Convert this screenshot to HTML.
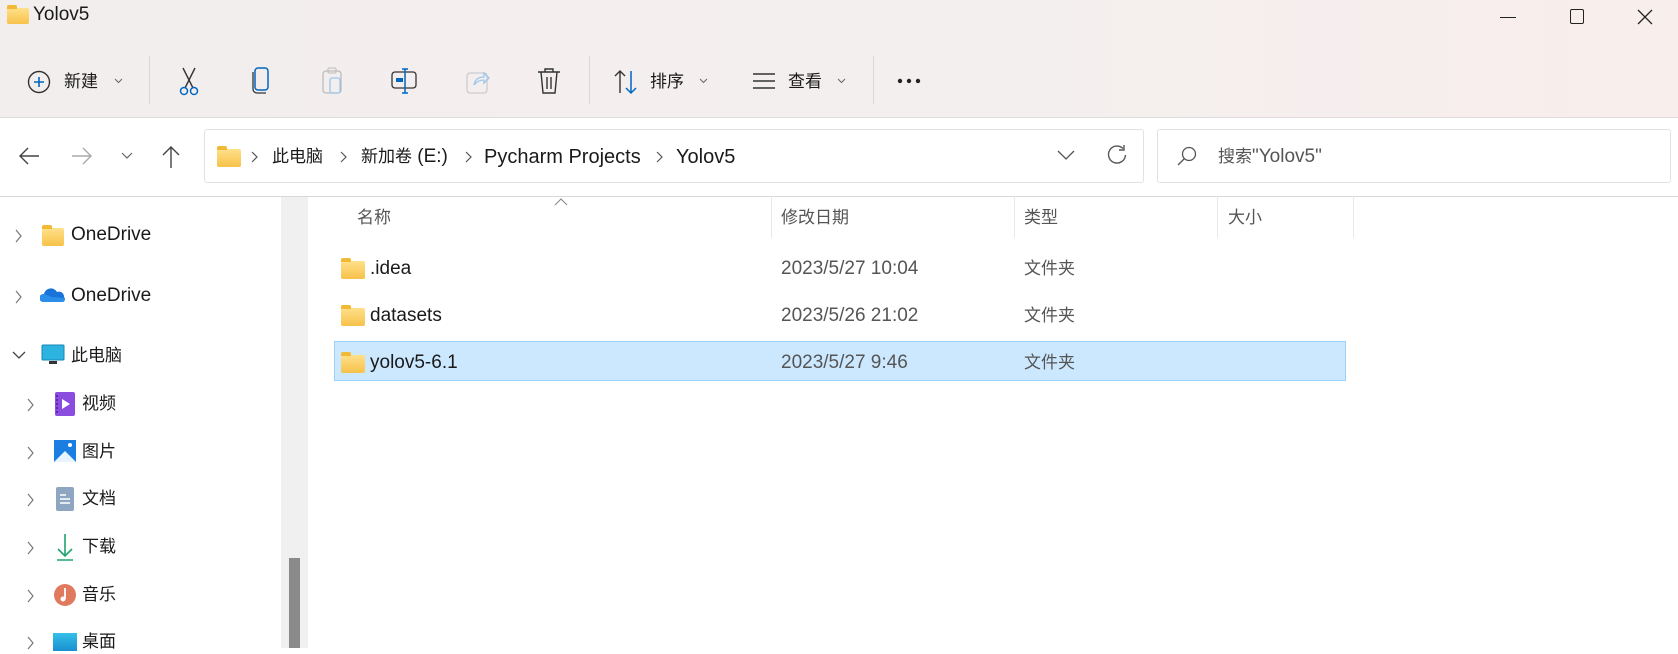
<!DOCTYPE html>
<html><head><meta charset="utf-8"><style>
*{margin:0;padding:0;box-sizing:border-box}
body{width:1678px;height:648px;overflow:hidden;background:#fff;font-family:"Liberation Sans","Noto Sans CJK SC",sans-serif;font-size:19px;color:#1a1a1a;position:relative}
.a{position:absolute;white-space:nowrap;line-height:24px}
.c{font-size:17px}
.top{position:absolute;left:0;top:0;width:1678px;height:118px;background:linear-gradient(90deg,#f3eeee,#f4efef 60%,#f8eeec);border-bottom:1px solid #e0dcdc}
.sep{position:absolute;width:1px;background:#ddd6d6}
.folder{position:absolute;width:24px;height:18px;background:linear-gradient(#ffe08a,#f7c24a);border-radius:2px}
.folder:before{content:"";position:absolute;left:0;top:-3px;width:10px;height:4px;background:#f2b934;border-radius:2px 2px 0 0}
.hd{color:#555}
.col{position:absolute;top:196px;width:1px;height:42px;background:#e8e8e8}
</style></head><body>
<div class="top"></div>
<div class="folder" style="left:7px;top:8px;width:22px;height:16px"></div>
<div class="a" style="left:33px;top:3px;font-size:19px">Yolov5</div>
<div class="a" style="left:1500px;top:17px;width:16px;height:1px;background:#222"></div>
<div class="a" style="left:1570px;top:9px;width:14px;height:15px;border:1.5px solid #222;border-radius:2px"></div>
<svg class="a" style="left:1637px;top:9px" width="16" height="16"><path d="M1 1L15 15M15 1L1 15" stroke="#222" stroke-width="1.3"/></svg>

<svg class="a" style="left:27px;top:70px" width="24" height="24"><circle cx="12" cy="12" r="10.5" fill="none" stroke="#333" stroke-width="1.4"/><path d="M12 7v10M7 12h10" stroke="#0067c0" stroke-width="1.6"/></svg>
<div class="a c" style="left:64px;top:70px">新建</div>
<svg class="a" style="left:114px;top:78px" width="9" height="6"><path d="M1 1l3.5 3.5L8 1" fill="none" stroke="#666"/></svg>
<div class="sep" style="left:149px;top:56px;height:48px"></div>
<svg class="a" style="left:176px;top:66px" width="26" height="30"><path d="M7 2L17 22M19 2L9 22" stroke="#333" stroke-width="1.4"/><circle cx="8" cy="25" r="3.5" fill="none" stroke="#0067c0" stroke-width="1.5"/><circle cx="18" cy="25" r="3.5" fill="none" stroke="#0067c0" stroke-width="1.5"/></svg>
<svg class="a" style="left:250px;top:67px" width="22" height="28"><rect x="5" y="1" width="13" height="22" rx="3" fill="none" stroke="#0067c0" stroke-width="1.5"/><path d="M3 5v17a4 4 0 0 0 4 4h9" fill="none" stroke="#333" stroke-width="1.3"/></svg>
<svg class="a" style="left:321px;top:67px" width="24" height="28"><rect x="2" y="4" width="18" height="22" rx="3" fill="none" stroke="#bbb" stroke-width="1.3"/><rect x="7" y="1" width="8" height="5" rx="1" fill="none" stroke="#bbb"/><rect x="9" y="11" width="10" height="15" rx="2" fill="none" stroke="#9cc6ec" stroke-width="1.3"/></svg>
<svg class="a" style="left:391px;top:68px" width="28" height="26"><rect x="1" y="4" width="24" height="16" rx="3" fill="none" stroke="#333" stroke-width="1.3"/><path d="M14 1v24M11 1h6M11 25h6" stroke="#0067c0" stroke-width="1.5"/><rect x="5" y="10" width="7" height="4" fill="#0067c0"/></svg>
<svg class="a" style="left:465px;top:67px" width="26" height="28"><rect x="2" y="6" width="20" height="20" rx="3" fill="none" stroke="#ccc" stroke-width="1.3"/><path d="M9 18c1-6 5-8 10-8V6l5 5-5 5v-3c-4 0-7 1-10 5z" fill="none" stroke="#9cc6ec" stroke-width="1.3"/></svg>
<svg class="a" style="left:537px;top:67px" width="24" height="28"><path d="M1 5h22M8 5V2h8v3M4 5l2 21h12l2-21M10 10v12M14 10v12" fill="none" stroke="#333" stroke-width="1.4"/></svg>
<div class="sep" style="left:589px;top:56px;height:48px"></div>
<svg class="a" style="left:613px;top:69px" width="26" height="26"><path d="M7 24V2M2 7l5-5 5 5" fill="none" stroke="#333" stroke-width="1.4"/><path d="M18 2v22M13 19l5 5 5-5" fill="none" stroke="#0067c0" stroke-width="1.5"/></svg>
<div class="a c" style="left:650px;top:70px">排序</div>
<svg class="a" style="left:699px;top:78px" width="9" height="6"><path d="M1 1l3.5 3.5L8 1" fill="none" stroke="#666"/></svg>
<svg class="a" style="left:752px;top:72px" width="24" height="18"><path d="M1 2h22M1 9h22M1 16h22" stroke="#333" stroke-width="1.4"/></svg>
<div class="a c" style="left:788px;top:70px">查看</div>
<svg class="a" style="left:837px;top:78px" width="9" height="6"><path d="M1 1l3.5 3.5L8 1" fill="none" stroke="#666"/></svg>
<div class="sep" style="left:873px;top:56px;height:48px"></div>
<svg class="a" style="left:897px;top:78px" width="24" height="6"><circle cx="3" cy="3" r="2.2" fill="#222"/><circle cx="12" cy="3" r="2.2" fill="#222"/><circle cx="21" cy="3" r="2.2" fill="#222"/></svg>

<svg class="a" style="left:18px;top:146px" width="22" height="20"><path d="M21 10H2M10 2L2 10l8 8" fill="none" stroke="#444" stroke-width="1.4"/></svg>
<svg class="a" style="left:71px;top:146px" width="22" height="20"><path d="M1 10h19M12 2l8 8-8 8" fill="none" stroke="#aaa" stroke-width="1.4"/></svg>
<svg class="a" style="left:121px;top:152px" width="12" height="8"><path d="M1 1l5 5 5-5" fill="none" stroke="#666" stroke-width="1.2"/></svg>
<svg class="a" style="left:161px;top:145px" width="20" height="24"><path d="M10 23V2M2 10l8-8 8 8" fill="none" stroke="#444" stroke-width="1.4"/></svg>
<div class="a" style="left:204px;top:129px;width:940px;height:54px;border:1px solid #e2e2e2;border-radius:3px;background:#fff"></div>
<div class="folder" style="left:217px;top:149px"></div>
<svg class="a" style="left:251px;top:151px" width="7" height="12"><path d="M1 1l5 5-5 5" fill="none" stroke="#555" stroke-width="1.2"/></svg>
<div class="a c" style="left:272px;top:145px">此电脑</div>
<svg class="a" style="left:340px;top:151px" width="7" height="12"><path d="M1 1l5 5-5 5" fill="none" stroke="#555" stroke-width="1.2"/></svg>
<div class="a" style="left:361px;top:145px"><span class="c">新加卷</span> (E:)</div>
<svg class="a" style="left:465px;top:151px" width="7" height="12"><path d="M1 1l5 5-5 5" fill="none" stroke="#555" stroke-width="1.2"/></svg>
<div class="a" style="left:484px;top:145px;font-size:20px">Pycharm Projects</div>
<svg class="a" style="left:656px;top:151px" width="7" height="12"><path d="M1 1l5 5-5 5" fill="none" stroke="#555" stroke-width="1.2"/></svg>
<div class="a" style="left:676px;top:145px;font-size:20px">Yolov5</div>
<svg class="a" style="left:1057px;top:150px" width="18" height="10"><path d="M1 1l8 8 8-8" fill="none" stroke="#555" stroke-width="1.3"/></svg>
<svg class="a" style="left:1106px;top:144px" width="22" height="22"><path d="M17 4.5A8.5 8.5 0 1 0 19.5 11" fill="none" stroke="#555" stroke-width="1.4"/><path d="M18 1v5h-5" fill="none" stroke="#555" stroke-width="1.4"/></svg>
<div class="a" style="left:1157px;top:129px;width:514px;height:54px;border:1px solid #e2e2e2;border-radius:3px;background:#fff"></div>
<svg class="a" style="left:1176px;top:145px" width="22" height="22"><circle cx="13" cy="9" r="6.5" fill="none" stroke="#555" stroke-width="1.3"/><path d="M8.5 13.5L2 20" stroke="#555" stroke-width="1.3"/></svg>
<div class="a" style="left:1218px;top:145px;color:#555"><span class="c">搜索</span>"Yolov5"</div>
<div class="a" style="left:0;top:196px;width:1678px;height:1px;background:#d8d8d8"></div>

<div class="a" style="left:281px;top:197px;width:27px;height:451px;background:#f0f0f0"></div>
<div class="a" style="left:289px;top:558px;width:11px;height:90px;background:#8a8a8a"></div>

<svg class="a" style="left:15px;top:229px" width="7" height="14"><path d="M1 1l5 6-5 6" fill="none" stroke="#777" stroke-width="1.2"/></svg>
<div class="folder" style="left:42px;top:228px;width:22px"></div><div class="a" style="left:71px;top:223px">OneDrive</div>
<svg class="a" style="left:15px;top:290px" width="7" height="14"><path d="M1 1l5 6-5 6" fill="none" stroke="#777" stroke-width="1.2"/></svg>
<svg class="a" style="left:40px;top:286px" width="26" height="18"><path d="M3 16a4 4 0 0 1 1-8 7 7 0 0 1 13-2 5 5 0 0 1 7 5 3 3 0 0 1-1 5z" fill="#1a73d9"/><path d="M3 16a4 4 0 0 1 1-8l8 3 12 1a3 3 0 0 1-1 4z" fill="#2b8ee8"/></svg>
<div class="a" style="left:71px;top:284px">OneDrive</div>
<svg class="a" style="left:12px;top:351px" width="14" height="10"><path d="M1 1l6 6 6-6" fill="none" stroke="#444" stroke-width="1.3"/></svg>
<svg class="a" style="left:41px;top:344px" width="24" height="22"><rect x="1" y="1" width="22" height="15" rx="1" fill="#2cb3e0"/><rect x="1" y="1" width="22" height="15" rx="1" fill="none" stroke="#1785b5"/><rect x="8" y="17" width="8" height="3" fill="#333"/></svg>
<div class="a c" style="left:71px;top:344px">此电脑</div>
<svg class="a" style="left:27px;top:398px" width="7" height="14"><path d="M1 1l5 6-5 6" fill="none" stroke="#777" stroke-width="1.2"/></svg>
<svg class="a" style="left:55px;top:392px" width="20" height="24"><rect width="20" height="24" rx="2" fill="#8a4de0"/><path d="M7 7l8 5-8 5z" fill="#fff"/><path d="M2 3v18" stroke="#5d2bb0" stroke-width="2" stroke-dasharray="2 2"/></svg><div class="a c" style="left:82px;top:392px">视频</div>
<svg class="a" style="left:27px;top:446px" width="7" height="14"><path d="M1 1l5 6-5 6" fill="none" stroke="#777" stroke-width="1.2"/></svg>
<svg class="a" style="left:54px;top:440px" width="22" height="22"><rect width="22" height="22" fill="#1a7fe0"/><path d="M0 22l11-11 11 11z" fill="#e8f4ff"/><circle cx="16" cy="5" r="2" fill="#fff"/></svg><div class="a c" style="left:82px;top:440px">图片</div>
<svg class="a" style="left:27px;top:493px" width="7" height="14"><path d="M1 1l5 6-5 6" fill="none" stroke="#777" stroke-width="1.2"/></svg>
<svg class="a" style="left:56px;top:487px" width="18" height="24"><rect width="18" height="24" rx="2" fill="#8ea6c2"/><path d="M4 8h6M4 12h10M4 16h10" stroke="#fff" stroke-width="1.4"/></svg><div class="a c" style="left:82px;top:487px">文档</div>
<svg class="a" style="left:27px;top:541px" width="7" height="14"><path d="M1 1l5 6-5 6" fill="none" stroke="#777" stroke-width="1.2"/></svg>
<svg class="a" style="left:55px;top:532px" width="20" height="30"><path d="M10 2v22M3 17l7 7 7-7M2 28h16" fill="none" stroke="#1ea56e" stroke-width="1.6"/></svg><div class="a c" style="left:82px;top:535px">下载</div>
<svg class="a" style="left:27px;top:589px" width="7" height="14"><path d="M1 1l5 6-5 6" fill="none" stroke="#777" stroke-width="1.2"/></svg>
<svg class="a" style="left:53px;top:583px" width="24" height="24"><circle cx="12" cy="12" r="11" fill="#e07a5f"/><path d="M12 5v11" stroke="#fff" stroke-width="1.8"/><circle cx="10" cy="16" r="2.5" fill="#fff"/></svg><div class="a c" style="left:82px;top:583px">音乐</div>
<svg class="a" style="left:27px;top:636px" width="7" height="14"><path d="M1 1l5 6-5 6" fill="none" stroke="#777" stroke-width="1.2"/></svg>
<div class="a" style="left:53px;top:633px;width:24px;height:18px;background:linear-gradient(#35c0e8,#1a8fd0)"></div><div class="a c" style="left:82px;top:630px">桌面</div>

<svg class="a" style="left:554px;top:198px" width="14" height="8"><path d="M1 7l6-6 6 6" fill="none" stroke="#888" stroke-width="1.1"/></svg>
<div class="a hd c" style="left:357px;top:206px">名称</div>
<div class="col" style="left:771px"></div><div class="a hd c" style="left:781px;top:206px">修改日期</div>
<div class="col" style="left:1014px"></div><div class="a hd c" style="left:1024px;top:206px">类型</div>
<div class="col" style="left:1217px"></div><div class="a hd c" style="left:1228px;top:206px">大小</div>
<div class="col" style="left:1353px"></div>

<div class="a" style="left:334px;top:341px;width:1012px;height:40px;background:#cce8ff;border:1px solid #99d1ff"></div>
<div class="folder" style="left:341px;top:261px"></div><div class="a" style="left:370px;top:257px">.idea</div><div class="a hd" style="left:781px;top:257px">2023/5/27 10:04</div><div class="a hd c" style="left:1024px;top:257px">文件夹</div>
<div class="folder" style="left:341px;top:308px"></div><div class="a" style="left:370px;top:304px">datasets</div><div class="a hd" style="left:781px;top:304px">2023/5/26 21:02</div><div class="a hd c" style="left:1024px;top:304px">文件夹</div>
<div class="folder" style="left:341px;top:355px"></div><div class="a" style="left:370px;top:351px">yolov5-6.1</div><div class="a hd" style="left:781px;top:351px">2023/5/27 9:46</div><div class="a hd c" style="left:1024px;top:351px">文件夹</div>
</body></html>
